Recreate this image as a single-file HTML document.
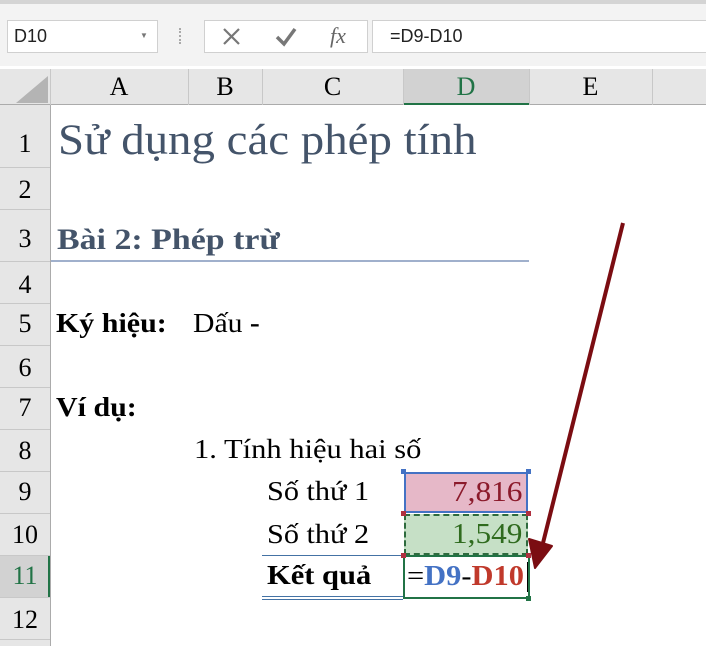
<!DOCTYPE html>
<html><head><meta charset="utf-8"><style>
body{margin:0;width:706px;height:646px;overflow:hidden;background:#fff;font-family:"Liberation Serif",serif;position:relative}
.a{position:absolute}
.t{position:absolute;white-space:nowrap;font-family:"Liberation Serif",serif;transform-origin:0 0}
</style></head><body>
<div class="a" style="left:0;top:0;width:706px;height:66px;background:#f3f3f3"></div>
<div class="a" style="left:0;top:0;width:706px;height:4px;background:#d4d4d4"></div>
<div class="a" style="left:7px;top:20px;width:151px;height:33px;background:#fff;border:1px solid #d0d0d0;box-sizing:border-box"></div>
<div class="t" style="left:14px;top:26px;font:18px 'Liberation Sans',sans-serif;color:#222">D10</div>
<div class="t" style="left:140px;top:31px;font:8px 'Liberation Sans',sans-serif;color:#777">▼</div>
<div class="a" style="left:179px;top:28px;width:2px;height:16px;border-left:2px dotted #aaa"></div>
<div class="a" style="left:204px;top:20px;width:164px;height:33px;background:#fff;border:1px solid #d0d0d0;box-sizing:border-box"></div>
<div class="a" style="left:372px;top:20px;width:336px;height:33px;background:#fff;border:1px solid #d0d0d0;box-sizing:border-box"></div>
<svg class="a" style="left:222px;top:27px" width="20" height="20"><path d="M2 2L17 17M17 2L2 17" stroke="#777" stroke-width="2.2"/></svg>
<svg class="a" style="left:274px;top:26px" width="24" height="22"><path d="M3 11L10 18L21 3" stroke="#777" stroke-width="3.5" fill="none"/></svg>
<div class="t" style="left:330px;top:23px;font:italic 22px 'Liberation Serif',serif;color:#666">fx</div>
<div class="t" style="left:390px;top:26px;font:18px 'Liberation Sans',sans-serif;color:#222">=D9-D10</div>
<!-- column headers -->
<div class="a" style="left:0;top:69px;width:706px;height:36px;background:#e6e6e6;border-bottom:1px solid #ababab;box-sizing:border-box"></div>
<svg class="a" style="left:16px;top:76px" width="32" height="27"><path d="M32 0L32 27L0 27Z" fill="#b4b4b4"/></svg>
<div class="a" style="left:403px;top:69px;width:126px;height:36px;background:#d2d2d2;border-bottom:2px solid #217346;box-sizing:border-box"></div>
<div class="a" style="left:50px;top:69px;width:1px;height:36px;background:#c8c8c8"></div>
<div class="a" style="left:188px;top:69px;width:1px;height:36px;background:#c8c8c8"></div>
<div class="a" style="left:262px;top:69px;width:1px;height:36px;background:#c8c8c8"></div>
<div class="a" style="left:403px;top:69px;width:1px;height:36px;background:#c8c8c8"></div>
<div class="a" style="left:529px;top:69px;width:1px;height:36px;background:#c8c8c8"></div>
<div class="a" style="left:652px;top:69px;width:1px;height:36px;background:#c8c8c8"></div>
<div class="t" style="left:50px;width:138px;top:72px;text-align:center;font-size:26px">A</div>
<div class="t" style="left:188px;width:74px;top:72px;text-align:center;font-size:26px">B</div>
<div class="t" style="left:262px;width:141px;top:72px;text-align:center;font-size:26px">C</div>
<div class="t" style="left:403px;width:126px;top:72px;text-align:center;font-size:26px;color:#217346">D</div>
<div class="t" style="left:529px;width:123px;top:72px;text-align:center;font-size:26px">E</div>
<!-- row headers -->
<div class="a" style="left:0;top:105px;width:50px;height:541px;background:#e6e6e6;border-right:1px solid #ababab"></div>
<div class="a" style="left:0;top:555px;width:50px;height:42px;background:#d2d2d2;border-right:2px solid #217346;box-sizing:border-box"></div>
<div class="a" style="left:0;top:167px;width:50px;height:1px;background:#c8c8c8"></div>
<div class="a" style="left:0;top:209px;width:50px;height:1px;background:#c8c8c8"></div>
<div class="a" style="left:0;top:261px;width:50px;height:1px;background:#c8c8c8"></div>
<div class="a" style="left:0;top:303px;width:50px;height:1px;background:#c8c8c8"></div>
<div class="a" style="left:0;top:345px;width:50px;height:1px;background:#c8c8c8"></div>
<div class="a" style="left:0;top:387px;width:50px;height:1px;background:#c8c8c8"></div>
<div class="a" style="left:0;top:429px;width:50px;height:1px;background:#c8c8c8"></div>
<div class="a" style="left:0;top:471px;width:50px;height:1px;background:#c8c8c8"></div>
<div class="a" style="left:0;top:513px;width:50px;height:1px;background:#c8c8c8"></div>
<div class="a" style="left:0;top:555px;width:50px;height:1px;background:#c8c8c8"></div>
<div class="a" style="left:0;top:597px;width:50px;height:1px;background:#c8c8c8"></div>
<div class="a" style="left:0;top:639px;width:50px;height:1px;background:#c8c8c8"></div>
<div class="t" style="left:0;width:50px;text-align:center;top:129px;font-size:26px">1</div>
<div class="t" style="left:0;width:50px;text-align:center;top:175px;font-size:26px">2</div>
<div class="t" style="left:0;width:50px;text-align:center;top:224px;font-size:26px">3</div>
<div class="t" style="left:0;width:50px;text-align:center;top:270px;font-size:26px">4</div>
<div class="t" style="left:0;width:50px;text-align:center;top:309px;font-size:26px">5</div>
<div class="t" style="left:0;width:50px;text-align:center;top:353px;font-size:26px">6</div>
<div class="t" style="left:0;width:50px;text-align:center;top:393px;font-size:26px">7</div>
<div class="t" style="left:0;width:50px;text-align:center;top:436px;font-size:26px">8</div>
<div class="t" style="left:0;width:50px;text-align:center;top:477px;font-size:26px">9</div>
<div class="t" style="left:0;width:50px;text-align:center;top:520px;font-size:26px">10</div>
<div class="t" style="left:0;width:50px;text-align:center;top:561px;font-size:26px;color:#217346">11</div>
<div class="t" style="left:0;width:50px;text-align:center;top:605px;font-size:26px">12</div>
<!-- content -->
<div class="t" style="left:58px;top:116px;font-size:43px;color:#44546a;transform:scaleX(1.09)">Sử dụng các phép tính</div>
<div class="t" style="left:57px;top:223px;font-size:30px;font-weight:bold;color:#44546a;transform:scaleX(1.13)">Bài 2: Phép trừ</div>
<div class="a" style="left:51px;top:260px;width:478px;height:2px;background:#a0b0cc"></div>
<div class="t" style="left:56px;top:308px;font-size:27px;font-weight:bold;transform:scaleX(1.11)">Ký hiệu:</div>
<div class="t" style="left:193px;top:308px;font-size:27px;transform:scaleX(1.1)">Dấu <b>-</b></div>
<div class="t" style="left:56px;top:392px;font-size:27px;font-weight:bold;transform:scaleX(1.11)">Ví dụ:</div>
<div class="t" style="left:194px;top:434px;font-size:27px;transform:scaleX(1.13)">1. Tính hiệu hai số</div>
<div class="t" style="left:267px;top:476px;font-size:27px;transform:scaleX(1.12)">Số thứ 1</div>
<div class="t" style="left:267px;top:519px;font-size:27px;transform:scaleX(1.12)">Số thứ 2</div>
<div class="t" style="left:267px;top:560px;font-size:27px;font-weight:bold;transform:scaleX(1.13)">Kết quả</div>
<div class="a" style="left:404px;top:472px;width:124px;height:41px;background:#e6b8c8;border:2px solid #4472c4;box-sizing:border-box"></div>
<div class="t" style="left:452px;top:476px;font-size:29px;color:#8b1a2b;transform:scaleX(1.08)">7,816</div>
<div class="a" style="left:404px;top:514px;width:124px;height:41px;background:#c6e0c6;border:2px dashed #2e6b3e;box-sizing:border-box"></div>
<div class="t" style="left:452px;top:518px;font-size:29px;color:#2f6b1e;transform:scaleX(1.08)">1,549</div>
<div class="a" style="left:262px;top:555px;width:141px;height:1px;background:#4472a4"></div>
<div class="a" style="left:262px;top:596px;width:141px;height:4px;border-top:1px solid #4472a4;border-bottom:1px solid #4472a4;box-sizing:border-box"></div>
<div class="a" style="left:403px;top:555px;width:127px;height:44px;border:2px solid #217346;box-sizing:border-box"></div>
<div class="t" style="left:407px;top:560px;font-size:29px;font-weight:bold;transform:scaleX(1.05)"><span style="font-weight:normal">=</span><span style="color:#4472c4">D9</span><span style="font-weight:normal">-</span><span style="color:#c0392b">D10</span></div>
<div class="a" style="left:527px;top:562px;width:1px;height:30px;background:#000"></div>
<div class="a" style="left:526px;top:596px;width:5px;height:5px;background:#217346"></div>
<div class="a" style="left:401px;top:469px;width:5px;height:5px;background:#4472c4"></div>
<div class="a" style="left:526px;top:469px;width:5px;height:5px;background:#4472c4"></div>
<div class="a" style="left:401px;top:511px;width:5px;height:5px;background:#b03040"></div>
<div class="a" style="left:526px;top:511px;width:5px;height:5px;background:#b03040"></div>
<div class="a" style="left:401px;top:553px;width:5px;height:5px;background:#b03040"></div>
<div class="a" style="left:526px;top:553px;width:5px;height:5px;background:#b03040"></div>
<svg class="a" style="left:520px;top:215px" width="120" height="360"><path d="M103 8L23 328" stroke="#7b0d12" stroke-width="4"/><path d="M15 353L9 324L32 331Z" fill="#7b0d12" stroke="#7b0d12" stroke-width="2" stroke-linejoin="round"/></svg>
</body></html>
